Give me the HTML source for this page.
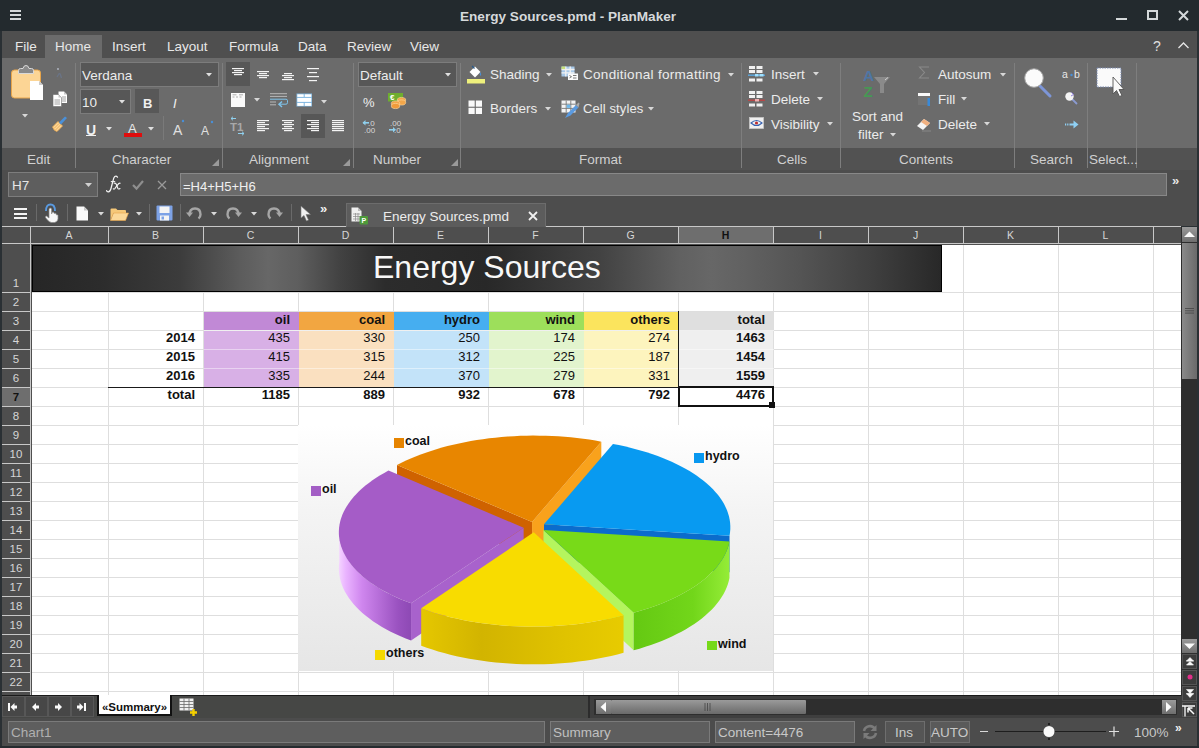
<!DOCTYPE html><html><head><meta charset="utf-8"><style>
*{margin:0;padding:0;box-sizing:border-box}
html,body{width:1199px;height:748px;overflow:hidden;background:#4d4d4d;font-family:"Liberation Sans",sans-serif;position:relative}
.a{position:absolute}
.t{position:absolute;white-space:nowrap;color:#e6e6e6}
svg{overflow:visible}
</style></head><body>
<div class="a" style="left:0px;top:0px;width:1199px;height:748px;background:#2a3034;"></div>
<div class="a" style="left:0px;top:0px;width:1199px;height:31px;background:#232a2e;"></div>
<div class="a" style="left:2px;top:31px;width:1195px;height:27px;background:#4f4f4f;"></div>
<div class="a" style="left:2px;top:58px;width:1195px;height:90px;background:#6b6b6b;"></div>
<div class="a" style="left:2px;top:148px;width:1195px;height:22px;background:#525252;"></div>
<div class="a" style="left:2px;top:170px;width:1195px;height:56px;background:#4d4d4d;"></div>
<div class="a" style="left:10px;top:10px;width:11px;height:2px;background:#d4d8da;"></div>
<div class="a" style="left:10px;top:14px;width:11px;height:2px;background:#d4d8da;"></div>
<div class="a" style="left:10px;top:18px;width:11px;height:2px;background:#d4d8da;"></div>
<div class="t" style="left:460px;top:9px;font-size:13.6px;line-height:16px;color:#d6d9db;font-weight:bold;">Energy Sources.pmd - PlanMaker</div>
<div class="a" style="left:1116px;top:18px;width:11px;height:2px;background:#d4d8da;"></div>
<div class="a" style="left:1147px;top:10px;width:11px;height:10px;border:2px solid #d4d8da"></div>
<svg class="a" style="left:1178px;top:10px;" width="11" height="11" viewBox="0 0 11 11"><path d="M1 1L10 10M10 1L1 10" stroke="#d4d8da" stroke-width="2"/></svg>
<div class="a" style="left:45px;top:35px;width:57px;height:23px;background:#6b6b6b;"></div>
<div class="t" style="left:15px;top:39px;font-size:13.5px;line-height:16px;color:#e8e8e8;font-weight:normal;">File</div>
<div class="t" style="left:55px;top:39px;font-size:13.5px;line-height:16px;color:#e8e8e8;font-weight:normal;">Home</div>
<div class="t" style="left:112px;top:39px;font-size:13.5px;line-height:16px;color:#e8e8e8;font-weight:normal;">Insert</div>
<div class="t" style="left:167px;top:39px;font-size:13.5px;line-height:16px;color:#e8e8e8;font-weight:normal;">Layout</div>
<div class="t" style="left:229px;top:39px;font-size:13.5px;line-height:16px;color:#e8e8e8;font-weight:normal;">Formula</div>
<div class="t" style="left:298px;top:39px;font-size:13.5px;line-height:16px;color:#e8e8e8;font-weight:normal;">Data</div>
<div class="t" style="left:347px;top:39px;font-size:13.5px;line-height:16px;color:#e8e8e8;font-weight:normal;">Review</div>
<div class="t" style="left:410px;top:39px;font-size:13.5px;line-height:16px;color:#e8e8e8;font-weight:normal;">View</div>
<div class="t" style="left:1153px;top:37.5px;font-size:14px;line-height:16px;color:#e0e0e0;font-weight:normal;">?</div>
<svg class="a" style="left:1178px;top:42px;" width="11" height="7" viewBox="0 0 11 7"><path d="M0.5 6L5.5 1L10.5 6" stroke="#e6e6e6" stroke-width="1.3" fill="none"/></svg>
<div class="a" style="left:75px;top:63px;width:1px;height:105px;background:#7e7e7e;"></div>
<div class="a" style="left:222px;top:63px;width:1px;height:105px;background:#7e7e7e;"></div>
<div class="a" style="left:353px;top:63px;width:1px;height:105px;background:#7e7e7e;"></div>
<div class="a" style="left:460px;top:63px;width:1px;height:105px;background:#7e7e7e;"></div>
<div class="a" style="left:741px;top:63px;width:1px;height:105px;background:#7e7e7e;"></div>
<div class="a" style="left:840px;top:63px;width:1px;height:105px;background:#7e7e7e;"></div>
<div class="a" style="left:1014px;top:63px;width:1px;height:105px;background:#7e7e7e;"></div>
<div class="a" style="left:1087px;top:63px;width:1px;height:105px;background:#7e7e7e;"></div>
<div class="a" style="left:1136px;top:63px;width:1px;height:105px;background:#7e7e7e;"></div>
<div class="t" style="left:27px;top:152px;font-size:13.5px;line-height:16px;color:#d0d0d0;font-weight:normal;">Edit</div>
<div class="t" style="left:112px;top:152px;font-size:13.5px;line-height:16px;color:#d0d0d0;font-weight:normal;">Character</div>
<div class="t" style="left:249px;top:152px;font-size:13.5px;line-height:16px;color:#d0d0d0;font-weight:normal;">Alignment</div>
<div class="t" style="left:373px;top:152px;font-size:13.5px;line-height:16px;color:#d0d0d0;font-weight:normal;">Number</div>
<div class="t" style="left:579px;top:152px;font-size:13.5px;line-height:16px;color:#d0d0d0;font-weight:normal;">Format</div>
<div class="t" style="left:777px;top:152px;font-size:13.5px;line-height:16px;color:#d0d0d0;font-weight:normal;">Cells</div>
<div class="t" style="left:899px;top:152px;font-size:13.5px;line-height:16px;color:#d0d0d0;font-weight:normal;">Contents</div>
<div class="t" style="left:1030px;top:152px;font-size:13.5px;line-height:16px;color:#d0d0d0;font-weight:normal;">Search</div>
<div class="t" style="left:1089px;top:152px;font-size:13.5px;line-height:16px;color:#d0d0d0;font-weight:normal;">Select...</div>
<svg class="a" style="left:212px;top:159px;" width="7" height="7" viewBox="0 0 7 7"><path d="M7 0L7 7L0 7Z" fill="#9a9a9a"/></svg>
<svg class="a" style="left:343px;top:159px;" width="7" height="7" viewBox="0 0 7 7"><path d="M7 0L7 7L0 7Z" fill="#9a9a9a"/></svg>
<svg class="a" style="left:451px;top:159px;" width="7" height="7" viewBox="0 0 7 7"><path d="M7 0L7 7L0 7Z" fill="#9a9a9a"/></svg>
<div class="a" style="left:8px;top:172px;width:90px;height:25px;background:#5e5e5e;border:1px solid #7d7d7d"></div>
<div class="t" style="left:12px;top:178px;font-size:13.5px;line-height:16px;color:#e6e6e6;font-weight:normal;">H7</div>
<svg class="a" style="left:85px;top:183px;" width="7" height="4" viewBox="0 0 7 4"><path d="M0 0L7 0L3.5 4Z" fill="#d0d0d0"/></svg>
<svg class="a" style="left:104px;top:175px;" width="18" height="18" viewBox="0 0 18 18"><path d="M13.5 2.2 Q12.2 0.6 10.8 1.6 Q9.8 2.4 9.2 5 L7 13.5 Q6.2 16.6 4.4 16.8 Q2.8 16.9 2.6 15.6" stroke="#f2f2f2" stroke-width="1.25" fill="none" stroke-linecap="round"/><path d="M6.8 6.6 H11.2" stroke="#f2f2f2" stroke-width="1.1"/><path d="M10.2 8.2 Q11.6 7.6 12.3 9.2 L13.8 13.2 Q14.4 14.6 16 13.6" stroke="#f2f2f2" stroke-width="1.15" fill="none" stroke-linecap="round"/><path d="M16.2 8.2 Q15 7.9 13.2 10.4 L10.8 13.6 Q10 14.4 9.3 13.8" stroke="#f2f2f2" stroke-width="1.15" fill="none" stroke-linecap="round"/></svg>
<svg class="a" style="left:132px;top:180px;" width="12" height="10" viewBox="0 0 12 10"><path d="M1 5L4.5 8.6L11 1" stroke="#8e8e8e" stroke-width="2.2" fill="none"/></svg>
<svg class="a" style="left:157px;top:180px;" width="10" height="10" viewBox="0 0 10 10"><path d="M1 1L9 9M9 1L1 9" stroke="#9a9a9a" stroke-width="1.3"/></svg>
<div class="a" style="left:180px;top:173px;width:987px;height:23px;background:#6b6b6b;border:1px solid #888"></div>
<div class="t" style="left:183px;top:179px;font-size:13px;line-height:15px;color:#f0f0f0;font-weight:normal;">=H4+H5+H6</div>
<div class="t" style="left:1172px;top:173px;font-size:13px;line-height:15px;color:#e6e6e6;font-weight:bold;">&raquo;</div>
<div class="a" style="left:31px;top:244px;width:1150px;height:451px;background:#ffffff;"></div>
<div class="a" style="left:108px;top:244px;width:1px;height:451px;background:#dedede;"></div>
<div class="a" style="left:203px;top:244px;width:1px;height:451px;background:#dedede;"></div>
<div class="a" style="left:298px;top:244px;width:1px;height:451px;background:#dedede;"></div>
<div class="a" style="left:393px;top:244px;width:1px;height:451px;background:#dedede;"></div>
<div class="a" style="left:488px;top:244px;width:1px;height:451px;background:#dedede;"></div>
<div class="a" style="left:583px;top:244px;width:1px;height:451px;background:#dedede;"></div>
<div class="a" style="left:678px;top:244px;width:1px;height:451px;background:#dedede;"></div>
<div class="a" style="left:773px;top:244px;width:1px;height:451px;background:#dedede;"></div>
<div class="a" style="left:868px;top:244px;width:1px;height:451px;background:#dedede;"></div>
<div class="a" style="left:963px;top:244px;width:1px;height:451px;background:#dedede;"></div>
<div class="a" style="left:1058px;top:244px;width:1px;height:451px;background:#dedede;"></div>
<div class="a" style="left:1153px;top:244px;width:1px;height:451px;background:#dedede;"></div>
<div class="a" style="left:31px;top:292px;width:1150px;height:1px;background:#dedede;"></div>
<div class="a" style="left:31px;top:311px;width:1150px;height:1px;background:#dedede;"></div>
<div class="a" style="left:31px;top:330px;width:1150px;height:1px;background:#dedede;"></div>
<div class="a" style="left:31px;top:349px;width:1150px;height:1px;background:#dedede;"></div>
<div class="a" style="left:31px;top:368px;width:1150px;height:1px;background:#dedede;"></div>
<div class="a" style="left:31px;top:387px;width:1150px;height:1px;background:#dedede;"></div>
<div class="a" style="left:31px;top:406px;width:1150px;height:1px;background:#dedede;"></div>
<div class="a" style="left:31px;top:425px;width:1150px;height:1px;background:#dedede;"></div>
<div class="a" style="left:31px;top:444px;width:1150px;height:1px;background:#dedede;"></div>
<div class="a" style="left:31px;top:463px;width:1150px;height:1px;background:#dedede;"></div>
<div class="a" style="left:31px;top:482px;width:1150px;height:1px;background:#dedede;"></div>
<div class="a" style="left:31px;top:501px;width:1150px;height:1px;background:#dedede;"></div>
<div class="a" style="left:31px;top:520px;width:1150px;height:1px;background:#dedede;"></div>
<div class="a" style="left:31px;top:539px;width:1150px;height:1px;background:#dedede;"></div>
<div class="a" style="left:31px;top:558px;width:1150px;height:1px;background:#dedede;"></div>
<div class="a" style="left:31px;top:577px;width:1150px;height:1px;background:#dedede;"></div>
<div class="a" style="left:31px;top:596px;width:1150px;height:1px;background:#dedede;"></div>
<div class="a" style="left:31px;top:615px;width:1150px;height:1px;background:#dedede;"></div>
<div class="a" style="left:31px;top:634px;width:1150px;height:1px;background:#dedede;"></div>
<div class="a" style="left:31px;top:653px;width:1150px;height:1px;background:#dedede;"></div>
<div class="a" style="left:31px;top:672px;width:1150px;height:1px;background:#dedede;"></div>
<div class="a" style="left:31px;top:691px;width:1150px;height:1px;background:#dedede;"></div>
<div class="a" style="left:2px;top:226px;width:1179px;height:1px;background:#c8c8c8;"></div>
<div class="a" style="left:2px;top:227px;width:1179px;height:16px;background:#4e4e4e;"></div>
<div class="a" style="left:2px;top:243px;width:1179px;height:1px;background:#c8c8c8;"></div>
<div class="a" style="left:679px;top:227px;width:94px;height:16px;background:#6e6e6e;"></div>
<div class="a" style="left:30px;top:227px;width:1px;height:16px;background:#c8c8c8;"></div>
<div class="a" style="left:108px;top:227px;width:1px;height:16px;background:#c8c8c8;"></div>
<div class="a" style="left:203px;top:227px;width:1px;height:16px;background:#c8c8c8;"></div>
<div class="a" style="left:298px;top:227px;width:1px;height:16px;background:#c8c8c8;"></div>
<div class="a" style="left:393px;top:227px;width:1px;height:16px;background:#c8c8c8;"></div>
<div class="a" style="left:488px;top:227px;width:1px;height:16px;background:#c8c8c8;"></div>
<div class="a" style="left:583px;top:227px;width:1px;height:16px;background:#c8c8c8;"></div>
<div class="a" style="left:678px;top:227px;width:1px;height:16px;background:#c8c8c8;"></div>
<div class="a" style="left:773px;top:227px;width:1px;height:16px;background:#c8c8c8;"></div>
<div class="a" style="left:868px;top:227px;width:1px;height:16px;background:#c8c8c8;"></div>
<div class="a" style="left:963px;top:227px;width:1px;height:16px;background:#c8c8c8;"></div>
<div class="a" style="left:1058px;top:227px;width:1px;height:16px;background:#c8c8c8;"></div>
<div class="a" style="left:1153px;top:227px;width:1px;height:16px;background:#c8c8c8;"></div>
<div class="t" style="left:30px;top:229px;width:78px;text-align:center;font-size:10.5px;line-height:13px;color:#d6d6d6;font-weight:normal">A</div>
<div class="t" style="left:108px;top:229px;width:95px;text-align:center;font-size:10.5px;line-height:13px;color:#d6d6d6;font-weight:normal">B</div>
<div class="t" style="left:203px;top:229px;width:95px;text-align:center;font-size:10.5px;line-height:13px;color:#d6d6d6;font-weight:normal">C</div>
<div class="t" style="left:298px;top:229px;width:95px;text-align:center;font-size:10.5px;line-height:13px;color:#d6d6d6;font-weight:normal">D</div>
<div class="t" style="left:393px;top:229px;width:95px;text-align:center;font-size:10.5px;line-height:13px;color:#d6d6d6;font-weight:normal">E</div>
<div class="t" style="left:488px;top:229px;width:95px;text-align:center;font-size:10.5px;line-height:13px;color:#d6d6d6;font-weight:normal">F</div>
<div class="t" style="left:583px;top:229px;width:95px;text-align:center;font-size:10.5px;line-height:13px;color:#d6d6d6;font-weight:normal">G</div>
<div class="t" style="left:678px;top:229px;width:95px;text-align:center;font-size:10.5px;line-height:13px;color:#111;font-weight:bold">H</div>
<div class="t" style="left:773px;top:229px;width:95px;text-align:center;font-size:10.5px;line-height:13px;color:#d6d6d6;font-weight:normal">I</div>
<div class="t" style="left:868px;top:229px;width:95px;text-align:center;font-size:10.5px;line-height:13px;color:#d6d6d6;font-weight:normal">J</div>
<div class="t" style="left:963px;top:229px;width:95px;text-align:center;font-size:10.5px;line-height:13px;color:#d6d6d6;font-weight:normal">K</div>
<div class="t" style="left:1058px;top:229px;width:95px;text-align:center;font-size:10.5px;line-height:13px;color:#d6d6d6;font-weight:normal">L</div>
<div class="a" style="left:31px;top:244px;width:1150px;height:1px;background:#505050;"></div>
<div class="a" style="left:31px;top:244px;width:1px;height:451px;background:#505050;"></div>
<div class="a" style="left:2px;top:244px;width:28px;height:451px;background:#4e4e4e;"></div>
<div class="a" style="left:30px;top:244px;width:1px;height:451px;background:#c8c8c8;"></div>
<div class="a" style="left:2px;top:388px;width:28px;height:18px;background:#6e6e6e;"></div>
<div class="a" style="left:2px;top:292px;width:29px;height:1px;background:#c8c8c8;"></div>
<div class="a" style="left:2px;top:311px;width:29px;height:1px;background:#c8c8c8;"></div>
<div class="a" style="left:2px;top:330px;width:29px;height:1px;background:#c8c8c8;"></div>
<div class="a" style="left:2px;top:349px;width:29px;height:1px;background:#c8c8c8;"></div>
<div class="a" style="left:2px;top:368px;width:29px;height:1px;background:#c8c8c8;"></div>
<div class="a" style="left:2px;top:387px;width:29px;height:1px;background:#c8c8c8;"></div>
<div class="a" style="left:2px;top:406px;width:29px;height:1px;background:#c8c8c8;"></div>
<div class="a" style="left:2px;top:425px;width:29px;height:1px;background:#c8c8c8;"></div>
<div class="a" style="left:2px;top:444px;width:29px;height:1px;background:#c8c8c8;"></div>
<div class="a" style="left:2px;top:463px;width:29px;height:1px;background:#c8c8c8;"></div>
<div class="a" style="left:2px;top:482px;width:29px;height:1px;background:#c8c8c8;"></div>
<div class="a" style="left:2px;top:501px;width:29px;height:1px;background:#c8c8c8;"></div>
<div class="a" style="left:2px;top:520px;width:29px;height:1px;background:#c8c8c8;"></div>
<div class="a" style="left:2px;top:539px;width:29px;height:1px;background:#c8c8c8;"></div>
<div class="a" style="left:2px;top:558px;width:29px;height:1px;background:#c8c8c8;"></div>
<div class="a" style="left:2px;top:577px;width:29px;height:1px;background:#c8c8c8;"></div>
<div class="a" style="left:2px;top:596px;width:29px;height:1px;background:#c8c8c8;"></div>
<div class="a" style="left:2px;top:615px;width:29px;height:1px;background:#c8c8c8;"></div>
<div class="a" style="left:2px;top:634px;width:29px;height:1px;background:#c8c8c8;"></div>
<div class="a" style="left:2px;top:653px;width:29px;height:1px;background:#c8c8c8;"></div>
<div class="a" style="left:2px;top:672px;width:29px;height:1px;background:#c8c8c8;"></div>
<div class="a" style="left:2px;top:691px;width:29px;height:1px;background:#c8c8c8;"></div>
<div class="t" style="left:2px;top:276px;width:28px;text-align:center;font-size:11.5px;line-height:14px;color:#d6d6d6;font-weight:normal">1</div>
<div class="t" style="left:2px;top:295px;width:28px;text-align:center;font-size:11.5px;line-height:14px;color:#d6d6d6;font-weight:normal">2</div>
<div class="t" style="left:2px;top:314px;width:28px;text-align:center;font-size:11.5px;line-height:14px;color:#d6d6d6;font-weight:normal">3</div>
<div class="t" style="left:2px;top:333px;width:28px;text-align:center;font-size:11.5px;line-height:14px;color:#d6d6d6;font-weight:normal">4</div>
<div class="t" style="left:2px;top:352px;width:28px;text-align:center;font-size:11.5px;line-height:14px;color:#d6d6d6;font-weight:normal">5</div>
<div class="t" style="left:2px;top:371px;width:28px;text-align:center;font-size:11.5px;line-height:14px;color:#d6d6d6;font-weight:normal">6</div>
<div class="t" style="left:2px;top:390px;width:28px;text-align:center;font-size:11.5px;line-height:14px;color:#111;font-weight:bold">7</div>
<div class="t" style="left:2px;top:409px;width:28px;text-align:center;font-size:11.5px;line-height:14px;color:#d6d6d6;font-weight:normal">8</div>
<div class="t" style="left:2px;top:428px;width:28px;text-align:center;font-size:11.5px;line-height:14px;color:#d6d6d6;font-weight:normal">9</div>
<div class="t" style="left:2px;top:447px;width:28px;text-align:center;font-size:11.5px;line-height:14px;color:#d6d6d6;font-weight:normal">10</div>
<div class="t" style="left:2px;top:466px;width:28px;text-align:center;font-size:11.5px;line-height:14px;color:#d6d6d6;font-weight:normal">11</div>
<div class="t" style="left:2px;top:485px;width:28px;text-align:center;font-size:11.5px;line-height:14px;color:#d6d6d6;font-weight:normal">12</div>
<div class="t" style="left:2px;top:504px;width:28px;text-align:center;font-size:11.5px;line-height:14px;color:#d6d6d6;font-weight:normal">13</div>
<div class="t" style="left:2px;top:523px;width:28px;text-align:center;font-size:11.5px;line-height:14px;color:#d6d6d6;font-weight:normal">14</div>
<div class="t" style="left:2px;top:542px;width:28px;text-align:center;font-size:11.5px;line-height:14px;color:#d6d6d6;font-weight:normal">15</div>
<div class="t" style="left:2px;top:561px;width:28px;text-align:center;font-size:11.5px;line-height:14px;color:#d6d6d6;font-weight:normal">16</div>
<div class="t" style="left:2px;top:580px;width:28px;text-align:center;font-size:11.5px;line-height:14px;color:#d6d6d6;font-weight:normal">17</div>
<div class="t" style="left:2px;top:599px;width:28px;text-align:center;font-size:11.5px;line-height:14px;color:#d6d6d6;font-weight:normal">18</div>
<div class="t" style="left:2px;top:618px;width:28px;text-align:center;font-size:11.5px;line-height:14px;color:#d6d6d6;font-weight:normal">19</div>
<div class="t" style="left:2px;top:637px;width:28px;text-align:center;font-size:11.5px;line-height:14px;color:#d6d6d6;font-weight:normal">20</div>
<div class="t" style="left:2px;top:656px;width:28px;text-align:center;font-size:11.5px;line-height:14px;color:#d6d6d6;font-weight:normal">21</div>
<div class="t" style="left:2px;top:675px;width:28px;text-align:center;font-size:11.5px;line-height:14px;color:#d6d6d6;font-weight:normal">22</div>
<div class="a" style="left:2px;top:695px;width:1195px;height:23px;background:#3d3d3d;"></div>
<div class="a" style="left:2px;top:718px;width:1195px;height:28px;background:#4d4d4d;"></div>
<div class="a" style="left:32px;top:245px;width:910px;height:47px;background:#000"></div>
<div class="a" style="left:33px;top:246px;width:908px;height:45px;background:linear-gradient(90deg,rgb(38,38,38) 0.0%,rgb(44,44,44) 7.4%,rgb(60,60,60) 16.2%,rgb(92,92,92) 22.8%,rgb(103,103,103) 25.9%,rgb(94,94,94) 29.2%,rgb(66,66,66) 33.8%,rgb(44,44,44) 38.8%,rgb(40,40,40) 49.9%,rgb(66,66,66) 62.4%,rgb(97,97,97) 71.3%,rgb(103,103,103) 74.7%,rgb(97,97,97) 78.4%,rgb(84,84,84) 84.5%,rgb(64,64,64) 92.2%,rgb(40,40,40) 100.0%)"></div>
<div class="t" style="left:373px;top:249px;font-size:32px;line-height:37px;color:#f8f8f8;font-weight:normal;">Energy Sources</div>
<div class="a" style="left:204px;top:312px;width:95px;height:18px;background:#c189d6;"></div>
<div class="a" style="left:204px;top:331px;width:95px;height:56px;background:#d8b0e6;"></div>
<div class="a" style="left:204px;top:330px;width:95px;height:1px;background:rgba(255,255,255,0.55);"></div>
<div class="a" style="left:204px;top:349px;width:95px;height:1px;background:rgba(255,255,255,0.45);"></div>
<div class="a" style="left:204px;top:368px;width:95px;height:1px;background:rgba(255,255,255,0.45);"></div>
<div class="a" style="left:299px;top:312px;width:95px;height:18px;background:#f2a641;"></div>
<div class="a" style="left:299px;top:331px;width:95px;height:56px;background:#fae0c0;"></div>
<div class="a" style="left:299px;top:330px;width:95px;height:1px;background:rgba(255,255,255,0.55);"></div>
<div class="a" style="left:299px;top:349px;width:95px;height:1px;background:rgba(255,255,255,0.45);"></div>
<div class="a" style="left:299px;top:368px;width:95px;height:1px;background:rgba(255,255,255,0.45);"></div>
<div class="a" style="left:394px;top:312px;width:95px;height:18px;background:#46aef0;"></div>
<div class="a" style="left:394px;top:331px;width:95px;height:56px;background:#c3e3f9;"></div>
<div class="a" style="left:394px;top:330px;width:95px;height:1px;background:rgba(255,255,255,0.55);"></div>
<div class="a" style="left:394px;top:349px;width:95px;height:1px;background:rgba(255,255,255,0.45);"></div>
<div class="a" style="left:394px;top:368px;width:95px;height:1px;background:rgba(255,255,255,0.45);"></div>
<div class="a" style="left:489px;top:312px;width:95px;height:18px;background:#9ddf5b;"></div>
<div class="a" style="left:489px;top:331px;width:95px;height:56px;background:#e2f4cd;"></div>
<div class="a" style="left:489px;top:330px;width:95px;height:1px;background:rgba(255,255,255,0.55);"></div>
<div class="a" style="left:489px;top:349px;width:95px;height:1px;background:rgba(255,255,255,0.45);"></div>
<div class="a" style="left:489px;top:368px;width:95px;height:1px;background:rgba(255,255,255,0.45);"></div>
<div class="a" style="left:584px;top:312px;width:95px;height:18px;background:#fbe45d;"></div>
<div class="a" style="left:584px;top:331px;width:95px;height:56px;background:#fdf4be;"></div>
<div class="a" style="left:584px;top:330px;width:95px;height:1px;background:rgba(255,255,255,0.55);"></div>
<div class="a" style="left:584px;top:349px;width:95px;height:1px;background:rgba(255,255,255,0.45);"></div>
<div class="a" style="left:584px;top:368px;width:95px;height:1px;background:rgba(255,255,255,0.45);"></div>
<div class="a" style="left:679px;top:312px;width:94px;height:18px;background:#dfdfdf;"></div>
<div class="a" style="left:679px;top:331px;width:94px;height:56px;background:#efefef;"></div>
<div class="a" style="left:679px;top:330px;width:95px;height:1px;background:rgba(255,255,255,0.55);"></div>
<div class="a" style="left:679px;top:349px;width:95px;height:1px;background:rgba(255,255,255,0.45);"></div>
<div class="a" style="left:679px;top:368px;width:95px;height:1px;background:rgba(255,255,255,0.45);"></div>
<div class="t" style="left:190px;top:312px;width:100px;text-align:right;font-size:13px;line-height:15px;color:#111;font-weight:bold">oil</div>
<div class="t" style="left:190px;top:330px;width:100px;text-align:right;font-size:13px;line-height:15px;color:#111;font-weight:normal">435</div>
<div class="t" style="left:190px;top:349px;width:100px;text-align:right;font-size:13px;line-height:15px;color:#111;font-weight:normal">415</div>
<div class="t" style="left:190px;top:368px;width:100px;text-align:right;font-size:13px;line-height:15px;color:#111;font-weight:normal">335</div>
<div class="t" style="left:190px;top:387px;width:100px;text-align:right;font-size:13px;line-height:15px;color:#111;font-weight:bold">1185</div>
<div class="t" style="left:285px;top:312px;width:100px;text-align:right;font-size:13px;line-height:15px;color:#111;font-weight:bold">coal</div>
<div class="t" style="left:285px;top:330px;width:100px;text-align:right;font-size:13px;line-height:15px;color:#111;font-weight:normal">330</div>
<div class="t" style="left:285px;top:349px;width:100px;text-align:right;font-size:13px;line-height:15px;color:#111;font-weight:normal">315</div>
<div class="t" style="left:285px;top:368px;width:100px;text-align:right;font-size:13px;line-height:15px;color:#111;font-weight:normal">244</div>
<div class="t" style="left:285px;top:387px;width:100px;text-align:right;font-size:13px;line-height:15px;color:#111;font-weight:bold">889</div>
<div class="t" style="left:380px;top:312px;width:100px;text-align:right;font-size:13px;line-height:15px;color:#111;font-weight:bold">hydro</div>
<div class="t" style="left:380px;top:330px;width:100px;text-align:right;font-size:13px;line-height:15px;color:#111;font-weight:normal">250</div>
<div class="t" style="left:380px;top:349px;width:100px;text-align:right;font-size:13px;line-height:15px;color:#111;font-weight:normal">312</div>
<div class="t" style="left:380px;top:368px;width:100px;text-align:right;font-size:13px;line-height:15px;color:#111;font-weight:normal">370</div>
<div class="t" style="left:380px;top:387px;width:100px;text-align:right;font-size:13px;line-height:15px;color:#111;font-weight:bold">932</div>
<div class="t" style="left:475px;top:312px;width:100px;text-align:right;font-size:13px;line-height:15px;color:#111;font-weight:bold">wind</div>
<div class="t" style="left:475px;top:330px;width:100px;text-align:right;font-size:13px;line-height:15px;color:#111;font-weight:normal">174</div>
<div class="t" style="left:475px;top:349px;width:100px;text-align:right;font-size:13px;line-height:15px;color:#111;font-weight:normal">225</div>
<div class="t" style="left:475px;top:368px;width:100px;text-align:right;font-size:13px;line-height:15px;color:#111;font-weight:normal">279</div>
<div class="t" style="left:475px;top:387px;width:100px;text-align:right;font-size:13px;line-height:15px;color:#111;font-weight:bold">678</div>
<div class="t" style="left:570px;top:312px;width:100px;text-align:right;font-size:13px;line-height:15px;color:#111;font-weight:bold">others</div>
<div class="t" style="left:570px;top:330px;width:100px;text-align:right;font-size:13px;line-height:15px;color:#111;font-weight:normal">274</div>
<div class="t" style="left:570px;top:349px;width:100px;text-align:right;font-size:13px;line-height:15px;color:#111;font-weight:normal">187</div>
<div class="t" style="left:570px;top:368px;width:100px;text-align:right;font-size:13px;line-height:15px;color:#111;font-weight:normal">331</div>
<div class="t" style="left:570px;top:387px;width:100px;text-align:right;font-size:13px;line-height:15px;color:#111;font-weight:bold">792</div>
<div class="t" style="left:665px;top:312px;width:100px;text-align:right;font-size:13px;line-height:15px;color:#111;font-weight:bold">total</div>
<div class="t" style="left:665px;top:330px;width:100px;text-align:right;font-size:13px;line-height:15px;color:#111;font-weight:bold">1463</div>
<div class="t" style="left:665px;top:349px;width:100px;text-align:right;font-size:13px;line-height:15px;color:#111;font-weight:bold">1454</div>
<div class="t" style="left:665px;top:368px;width:100px;text-align:right;font-size:13px;line-height:15px;color:#111;font-weight:bold">1559</div>
<div class="t" style="left:665px;top:387px;width:100px;text-align:right;font-size:13px;line-height:15px;color:#111;font-weight:bold">4476</div>
<div class="t" style="left:95px;top:330px;width:100px;text-align:right;font-size:13px;line-height:15px;color:#111;font-weight:bold">2014</div>
<div class="t" style="left:95px;top:349px;width:100px;text-align:right;font-size:13px;line-height:15px;color:#111;font-weight:bold">2015</div>
<div class="t" style="left:95px;top:368px;width:100px;text-align:right;font-size:13px;line-height:15px;color:#111;font-weight:bold">2016</div>
<div class="t" style="left:95px;top:387px;width:100px;text-align:right;font-size:13px;line-height:15px;color:#111;font-weight:bold">total</div>
<div class="a" style="left:108px;top:387px;width:570px;height:1px;background:#1a1a1a;"></div>
<div class="a" style="left:678px;top:311px;width:1px;height:77px;background:#1a1a1a;"></div>
<div class="a" style="left:678px;top:386px;width:96px;height:21px;border:2px solid #111"></div>
<div class="a" style="left:769px;top:402px;width:6px;height:6px;background:#111;"></div>
<div class="a" style="left:298px;top:425px;width:475px;height:246px;background:linear-gradient(180deg,#ffffff 0%,#f4f4f4 35%,#e6e6e6 100%)"></div>
<svg class="a" style="left:0px;top:0px;pointer-events:none" width="1199" height="748" viewBox="0 0 1199 748"><defs>
<linearGradient id="gOil" gradientUnits="userSpaceOnUse" x1="335" y1="0" x2="425" y2="0">
<stop offset="0" stop-color="#fae6ff"/><stop offset="0.12" stop-color="#eab4ff"/><stop offset="0.3" stop-color="#cf86ee"/><stop offset="0.7" stop-color="#9a52c0"/><stop offset="1" stop-color="#8040a8"/></linearGradient>
<linearGradient id="gOth" gradientUnits="userSpaceOnUse" x1="418" y1="0" x2="630" y2="0">
<stop offset="0" stop-color="#e6c800"/><stop offset="0.3" stop-color="#d2b400"/><stop offset="0.7" stop-color="#e0c300"/><stop offset="1" stop-color="#e8cc00"/></linearGradient>
<linearGradient id="gWind" gradientUnits="userSpaceOnUse" x1="630" y1="0" x2="735" y2="0">
<stop offset="0" stop-color="#64c812"/><stop offset="0.6" stop-color="#72d61a"/><stop offset="1" stop-color="#9af03c"/></linearGradient>
<linearGradient id="gHyd" gradientUnits="userSpaceOnUse" x1="700" y1="0" x2="735" y2="0">
<stop offset="0" stop-color="#0b7ad8"/><stop offset="1" stop-color="#2aa8ff"/></linearGradient>
</defs><polygon points="532.04,521.89 601.33,441.64 601.33,476.50 532.04,557.96" fill="#f9a21c"/><polygon points="532.04,521.89 396.99,465.05 396.99,500.09 532.04,557.96" fill="#cf6200"/><polygon points="532.04,521.89 601.33,441.64 595.37,440.57 589.34,439.61 583.24,438.75 577.09,437.99 570.89,437.33 564.64,436.78 558.37,436.34 552.06,435.99 545.73,435.76 539.39,435.63 533.05,435.60 526.70,435.68 520.36,435.87 514.04,436.16 507.74,436.55 501.47,437.05 495.23,437.66 489.04,438.36 482.90,439.17 476.82,440.08 470.80,441.10 464.85,442.21 458.98,443.42 453.19,444.72 447.50,446.12 441.90,447.62 436.41,449.21 431.03,450.89 425.77,452.66 420.63,454.52 415.61,456.46 410.74,458.49 406.01,460.60 401.42,462.79 396.99,465.05" fill="#e88600"/><polygon points="543.98,524.37 729.52,535.73 729.52,572.21 543.98,560.49" fill="#0b6ccc"/><polygon points="543.98,524.37 729.52,535.73 730.02,532.53 730.29,529.32 730.32,526.12 730.12,522.92 729.68,519.74 729.02,516.57 728.12,513.42 727.00,510.29 725.65,507.19 724.08,504.12 722.29,501.08 720.28,498.08 718.06,495.11 715.64,492.20 713.00,489.33 710.16,486.51 707.13,483.75 703.90,481.04 700.49,478.40 696.89,475.81 693.11,473.30 689.16,470.85 685.04,468.47 680.76,466.17 676.32,463.94 671.73,461.79 666.99,459.73 662.12,457.74 657.11,455.84 651.97,454.03 646.71,452.31 641.33,450.68 635.85,449.14 630.26,447.69 624.58,446.34 618.81,445.08 612.96,443.92" fill="#089af1"/><polygon points="523.63,527.69 411.08,603.36 411.08,640.62 523.63,563.84" fill="#a862cc"/><polygon points="339.30,526.04 338.96,529.26 338.85,532.49 338.99,535.73 339.36,538.96 339.98,542.19 340.83,545.41 341.92,548.62 343.26,551.81 344.83,554.97 346.64,558.11 348.68,561.22 350.96,564.29 353.47,567.32 356.22,570.31 359.19,573.26 362.38,576.15 365.79,578.98 369.43,581.75 373.27,584.46 377.32,587.10 381.58,589.67 386.03,592.17 390.68,594.58 395.52,596.91 400.53,599.15 405.72,601.31 411.08,603.36 411.08,640.62 405.72,638.52 400.53,636.33 395.52,634.04 390.68,631.67 386.03,629.22 381.58,626.68 377.32,624.07 373.27,621.38 369.43,618.62 365.79,615.80 362.38,612.92 359.19,609.98 356.22,606.99 353.47,603.95 350.96,600.86 348.68,597.74 346.64,594.58 344.83,591.39 343.26,588.17 341.92,584.93 340.83,581.68 339.98,578.40 339.36,575.12 338.99,571.84 338.85,568.55 338.96,565.27 339.30,561.99" fill="url(#gOil)"/><polygon points="523.63,527.69 388.51,470.55 384.24,472.88 380.15,475.28 376.21,477.76 372.45,480.29 368.87,482.90 365.47,485.56 362.25,488.28 359.23,491.05 356.39,493.88 353.76,496.75 351.33,499.67 349.11,502.63 347.10,505.63 345.30,508.66 343.72,511.73 342.35,514.82 341.21,517.94 340.29,521.08 339.59,524.24 339.12,527.41 338.89,530.58 338.88,533.77 339.10,536.95 339.56,540.13 340.24,543.31 341.16,546.47 342.32,549.62 343.70,552.76 345.32,555.86 347.16,558.95 349.23,562.00 351.53,565.01 354.06,567.99 356.81,570.92 359.77,573.81 362.95,576.64 366.35,579.42 369.96,582.14 373.77,584.80 377.78,587.39 381.99,589.91 386.39,592.36 390.98,594.73 395.75,597.02 400.69,599.22 405.81,601.34 411.08,603.36" fill="#a55cc7"/><polygon points="543.46,530.06 633.64,612.73 633.64,650.34 543.46,566.27" fill="#b4f55e"/><polygon points="633.64,612.73 639.54,611.07 645.32,609.31 650.95,607.44 656.44,605.48 661.78,603.42 666.95,601.27 671.96,599.04 676.80,596.72 681.46,594.32 685.93,591.84 690.21,589.28 694.29,586.66 698.18,583.97 701.85,581.21 705.32,578.40 708.57,575.53 711.61,572.61 714.43,569.64 717.02,566.63 719.39,563.58 721.52,560.50 723.43,557.39 725.11,554.25 726.55,551.08 727.76,547.90 728.73,544.71 729.47,541.50 729.47,578.07 728.73,581.33 727.76,584.57 726.55,587.80 725.11,591.01 723.43,594.20 721.52,597.36 719.39,600.49 717.02,603.59 714.43,606.64 711.61,609.66 708.57,612.62 705.32,615.53 701.85,618.39 698.18,621.18 694.29,623.91 690.21,626.57 685.93,629.16 681.46,631.68 676.80,634.11 671.96,636.47 666.95,638.73 661.78,640.91 656.44,643.00 650.95,644.98 645.32,646.87 639.54,648.66 633.64,650.34" fill="url(#gWind)"/><polygon points="543.46,530.06 633.64,612.73 639.54,611.07 645.32,609.31 650.95,607.44 656.44,605.48 661.78,603.42 666.95,601.27 671.96,599.04 676.80,596.72 681.46,594.32 685.93,591.84 690.21,589.28 694.29,586.66 698.18,583.97 701.85,581.21 705.32,578.40 708.57,575.53 711.61,572.61 714.43,569.64 717.02,566.63 719.39,563.58 721.52,560.50 723.43,557.39 725.11,554.25 726.55,551.08 727.76,547.90 728.73,544.71 729.47,541.50" fill="#78da18"/><polygon points="421.20,608.36 426.73,610.33 432.41,612.20 438.23,613.96 444.19,615.62 450.29,617.17 456.50,618.61 462.82,619.94 469.25,621.15 475.77,622.25 482.38,623.22 489.06,624.08 495.81,624.82 502.62,625.43 509.47,625.92 516.36,626.28 523.28,626.52 530.22,626.63 537.16,626.61 544.10,626.47 551.03,626.20 557.93,625.81 564.80,625.29 571.63,624.65 578.41,623.89 585.12,623.00 591.77,621.99 598.33,620.86 604.80,619.61 611.17,618.25 617.43,616.78 623.57,615.19 623.57,652.83 617.43,654.44 611.17,655.93 604.80,657.31 598.33,658.57 591.77,659.71 585.12,660.73 578.41,661.62 571.63,662.39 564.80,663.04 557.93,663.56 551.03,663.95 544.10,664.22 537.16,664.35 530.22,664.36 523.28,664.24 516.36,663.99 509.47,663.62 502.62,663.12 495.81,662.49 489.06,661.74 482.38,660.86 475.77,659.86 469.25,658.74 462.82,657.50 456.50,656.15 450.29,654.68 444.19,653.10 438.23,651.41 432.41,649.61 426.73,647.71 421.20,645.70" fill="url(#gOth)"/><polygon points="533.71,532.36 421.20,608.36 426.73,610.33 432.41,612.20 438.23,613.96 444.19,615.62 450.29,617.17 456.50,618.61 462.82,619.94 469.25,621.15 475.77,622.25 482.38,623.22 489.06,624.08 495.81,624.82 502.62,625.43 509.47,625.92 516.36,626.28 523.28,626.52 530.22,626.63 537.16,626.61 544.10,626.47 551.03,626.20 557.93,625.81 564.80,625.29 571.63,624.65 578.41,623.89 585.12,623.00 591.77,621.99 598.33,620.86 604.80,619.61 611.17,618.25 617.43,616.78 623.57,615.19" fill="#f8dc00"/></svg>
<div class="a" style="left:394px;top:438px;width:10px;height:9.5px;background:#e68400;"></div>
<div class="t" style="left:405px;top:434px;font-size:12.5px;line-height:14px;color:#111;font-weight:bold;">coal</div>
<div class="a" style="left:311px;top:486px;width:10px;height:9.5px;background:#a35ec5;"></div>
<div class="t" style="left:322px;top:482px;font-size:12.5px;line-height:14px;color:#111;font-weight:bold;">oil</div>
<div class="a" style="left:694px;top:453px;width:10px;height:9.5px;background:#0898f0;"></div>
<div class="t" style="left:705px;top:449px;font-size:12.5px;line-height:14px;color:#111;font-weight:bold;">hydro</div>
<div class="a" style="left:707px;top:640.5px;width:10px;height:9.5px;background:#76d919;"></div>
<div class="t" style="left:718px;top:636.5px;font-size:12.5px;line-height:14px;color:#111;font-weight:bold;">wind</div>
<div class="a" style="left:375px;top:650px;width:10px;height:9.5px;background:#f5d900;"></div>
<div class="t" style="left:386px;top:646px;font-size:12.5px;line-height:14px;color:#111;font-weight:bold;">others</div>
<svg class="a" style="left:10px;top:64px;" width="36" height="38" viewBox="0 0 36 38">
<rect x="1.5" y="6" width="29" height="28" rx="3" fill="#fcd595" stroke="#e8a54a" stroke-width="1"/>
<path d="M8.5 9.5 L8.5 6.5 Q8.5 4.5 10.5 4.5 L13 4.5 Q13.5 1.5 16 1.5 Q18.5 1.5 19 4.5 L21.5 4.5 Q23.5 4.5 23.5 6.5 L23.5 9.5 Z" fill="#8a8a8a" stroke="#d9d9d9" stroke-width="1"/>
<path d="M20 17 L29 17 L33 21 L33 36 L20 36 Z" fill="#ffffff"/>
<path d="M29 17 L29 21 L33 21 Z" fill="#cccccc"/>
</svg>
<svg class="a" style="left:22px;top:114px;" width="6" height="3.5" viewBox="0 0 6 3.5"><path d="M0 0L6 0L3.0 3.5Z" fill="#d8d8d8"/></svg>
<svg class="a" style="left:53px;top:66px;" width="14" height="14" viewBox="0 0 14 14"><circle cx="5" cy="3" r="0.9" fill="#c8d0e0" opacity="0.8"/><path d="M4 11 L6.5 7 M8.5 12 L7 7.5" stroke="#6a7fa8" stroke-width="1.3" opacity="0.45"/></svg>
<svg class="a" style="left:52px;top:91px;" width="16" height="16" viewBox="0 0 16 16">
<path d="M6.5 0.5 L12 0.5 L15 3.5 L15 12 L6.5 12 Z" fill="#ffffff"/><path d="M12 0.5 L12 3.5 L15 3.5Z" fill="#c8c8c8"/>
<path d="M10 6h4M10 8h4M10 10h4" stroke="#8a8a8a" stroke-width="0.8"/>
<path d="M1 3.5 L6.5 3.5 L9.5 6.5 L9.5 15.5 L1 15.5 Z" fill="#ffffff" stroke="#6b6b6b" stroke-width="0.6"/><path d="M6.5 3.5 L6.5 6.5 L9.5 6.5Z" fill="#c8c8c8"/>
<path d="M2.5 9h5.5M2.5 11h5.5M2.5 13h5.5" stroke="#8a8a8a" stroke-width="0.8"/>
</svg>
<svg class="a" style="left:51px;top:115px;" width="18" height="18" viewBox="0 0 18 18">
<path d="M1.5 12 L7 6.5 L11.5 11 L6 16.5 Q3 16 1.5 12Z" fill="#fcd595" stroke="#e8a54a" stroke-width="0.8"/>
<path d="M3 13.5L8 8.5M4.5 15L9.5 10" stroke="#e8a54a" stroke-width="0.8"/>
<path d="M8 7.5 L10 9.5 L16 3 L14 1.5Z" fill="#4a90d9"/>
</svg>
<div class="a" style="left:80px;top:62px;width:139px;height:25px;background:#575757;border:1px solid #7c7c7c"></div>
<div class="t" style="left:82px;top:68px;font-size:13.5px;line-height:16px;color:#ececec;font-weight:normal;">Verdana</div>
<svg class="a" style="left:206px;top:73px;" width="6" height="3.5" viewBox="0 0 6 3.5"><path d="M0 0L6 0L3.0 3.5Z" fill="#e0e0e0"/></svg>
<div class="a" style="left:80px;top:89px;width:51px;height:25px;background:#575757;border:1px solid #7c7c7c"></div>
<div class="t" style="left:82px;top:95px;font-size:13.5px;line-height:16px;color:#ececec;font-weight:normal;">10</div>
<svg class="a" style="left:118.5px;top:100px;" width="6" height="3.5" viewBox="0 0 6 3.5"><path d="M0 0L6 0L3.0 3.5Z" fill="#e0e0e0"/></svg>
<div class="a" style="left:135px;top:89px;width:24px;height:24px;background:#585858;"></div>
<div class="t" style="left:143px;top:96px;font-size:13px;line-height:15px;color:#f0f0f0;font-weight:bold;">B</div>
<div class="t" style="left:173px;top:96px;font-size:13px;line-height:15px;color:#f0f0f0;font-weight:normal;"><i>I</i></div>
<div class="t" style="left:86px;top:122px;font-size:14px;line-height:16px;color:#f0f0f0;font-weight:bold;">U</div>
<div class="a" style="left:86px;top:135px;width:10px;height:1.3px;background:#f0f0f0;"></div>
<svg class="a" style="left:106px;top:127px;" width="6" height="3.5" viewBox="0 0 6 3.5"><path d="M0 0L6 0L3.0 3.5Z" fill="#e0e0e0"/></svg>
<div class="t" style="left:128px;top:121px;font-size:13px;line-height:15px;color:#e8e8e8;font-weight:normal;">A</div>
<div class="a" style="left:124px;top:133px;width:18px;height:3.5px;background:#e00d0d;"></div>
<svg class="a" style="left:148px;top:127px;" width="6" height="3.5" viewBox="0 0 6 3.5"><path d="M0 0L6 0L3.0 3.5Z" fill="#e0e0e0"/></svg>
<div class="a" style="left:163px;top:116px;width:1px;height:24px;background:#7a7a7a;"></div>
<div class="t" style="left:173px;top:122px;font-size:14px;line-height:16px;color:#e0e0e0;font-weight:normal;">A</div>
<div class="t" style="left:201px;top:124px;font-size:12px;line-height:14px;color:#e0e0e0;font-weight:normal;">A</div>
<svg class="a" style="left:181px;top:119px;" width="4" height="4" viewBox="0 0 4 4"><circle cx="2" cy="2" r="1.2" fill="#4a90d9"/></svg>
<svg class="a" style="left:210px;top:120px;" width="4" height="4" viewBox="0 0 4 4"><circle cx="2" cy="2" r="1.2" fill="#4a90d9"/></svg>
<div class="a" style="left:226px;top:62px;width:24px;height:24px;background:#575757;"></div>
<div class="a" style="left:301px;top:114px;width:24px;height:24px;background:#575757;"></div>
<svg class="a" style="left:232px;top:68px;" width="14" height="16" viewBox="0 0 14 16"><rect x="0" y="0" width="12" height="1.2" fill="#f4f4f4"/><rect x="2" y="2" width="8" height="1.2" fill="#f4f4f4"/><rect x="0" y="4" width="12" height="1.2" fill="#f4f4f4"/><rect x="2" y="6" width="8" height="1.2" fill="#f4f4f4"/></svg>
<svg class="a" style="left:257px;top:71px;" width="14" height="16" viewBox="0 0 14 16"><rect x="0" y="0" width="12" height="1.2" fill="#f4f4f4"/><rect x="2" y="2" width="8" height="1.2" fill="#f4f4f4"/><rect x="0" y="4" width="12" height="1.2" fill="#f4f4f4"/><rect x="2" y="6" width="8" height="1.2" fill="#f4f4f4"/></svg>
<svg class="a" style="left:282px;top:73px;" width="14" height="16" viewBox="0 0 14 16"><rect x="2" y="0" width="8" height="1.2" fill="#f4f4f4"/><rect x="0" y="2" width="12" height="1.2" fill="#f4f4f4"/><rect x="2" y="4" width="8" height="1.2" fill="#f4f4f4"/><rect x="0" y="6" width="12" height="1.2" fill="#f4f4f4"/></svg>
<svg class="a" style="left:307px;top:68px;" width="14" height="16" viewBox="0 0 14 16"><rect x="0" y="0" width="12" height="1.2" fill="#f4f4f4"/><rect x="2" y="4" width="8" height="1.2" fill="#f4f4f4"/><rect x="0" y="8" width="12" height="1.2" fill="#f4f4f4"/><rect x="2" y="12" width="8" height="1.2" fill="#f4f4f4"/></svg>
<svg class="a" style="left:231px;top:93px;" width="15" height="14" viewBox="0 0 15 14"><rect x="0" y="0" width="14" height="14" fill="#fafafa"/><path d="M1.5 1.8h4M8 1.8h4M1.5 4h2M5 4h2M8.5 4h2" stroke="#9a9a9a" stroke-width="0.8"/></svg>
<svg class="a" style="left:254px;top:98px;" width="6" height="3.5" viewBox="0 0 6 3.5"><path d="M0 0L6 0L3.0 3.5Z" fill="#d8d8d8"/></svg>
<svg class="a" style="left:270px;top:93px;" width="19" height="15" viewBox="0 0 19 15"><path d="M0 0.7h17M0 3.4h17" stroke="#b8b8b8" stroke-width="1"/><path d="M0 6.2h16q1.5 0 1.5 1.5v2q0 1.5-1.5 1.5h-6" stroke="#7fc4ec" stroke-width="1" fill="none"/><path d="M0 9h6M0 11.8h6" stroke="#b8b8b8" stroke-width="1"/><path d="M12 8.5L9 11.2L12 14" stroke="#7fc4ec" stroke-width="1.5" fill="none"/></svg>
<svg class="a" style="left:296px;top:93px;" width="17" height="14" viewBox="0 0 17 14"><rect x="0.5" y="0.5" width="15.5" height="13" fill="#7fb6e0"/><rect x="1.3" y="1.3" width="6.4" height="2.6" fill="#fff"/><rect x="8.7" y="1.3" width="6.6" height="2.6" fill="#fff"/><rect x="1.3" y="4.9" width="14" height="4" fill="#fff"/><rect x="1.3" y="9.9" width="6.4" height="3" fill="#fff"/><rect x="8.7" y="9.9" width="6.6" height="3" fill="#fff"/></svg>
<svg class="a" style="left:321px;top:100px;" width="6" height="3.5" viewBox="0 0 6 3.5"><path d="M0 0L6 0L3.0 3.5Z" fill="#d8d8d8"/></svg>
<svg class="a" style="left:229px;top:116px;" width="18" height="20" viewBox="0 0 18 20"><path d="M2 2.5h5M2 2.5l2-1.8M2 2.5l2 1.8" stroke="#8fd0ee" stroke-width="1" fill="none"/><text x="1" y="14.5" font-family="Liberation Sans" font-weight="bold" font-size="11.5" fill="#a8a8a8">T1</text><path d="M9 17.5h6M15 17.5l-2-1.8M15 17.5l-2 1.8" stroke="#8fd0ee" stroke-width="1" fill="none"/></svg>
<svg class="a" style="left:257px;top:120px;" width="14" height="16" viewBox="0 0 14 16"><rect x="0" y="0" width="12" height="1.2" fill="#f4f4f4"/><rect x="0" y="2" width="8" height="1.2" fill="#f4f4f4"/><rect x="0" y="4" width="12" height="1.2" fill="#f4f4f4"/><rect x="0" y="6" width="8" height="1.2" fill="#f4f4f4"/><rect x="0" y="8" width="12" height="1.2" fill="#f4f4f4"/><rect x="0" y="10" width="8" height="1.2" fill="#f4f4f4"/></svg>
<svg class="a" style="left:282px;top:120px;" width="14" height="16" viewBox="0 0 14 16"><rect x="0" y="0" width="12" height="1.2" fill="#f4f4f4"/><rect x="2" y="2" width="8" height="1.2" fill="#f4f4f4"/><rect x="0" y="4" width="12" height="1.2" fill="#f4f4f4"/><rect x="2" y="6" width="8" height="1.2" fill="#f4f4f4"/><rect x="0" y="8" width="12" height="1.2" fill="#f4f4f4"/><rect x="2" y="10" width="8" height="1.2" fill="#f4f4f4"/></svg>
<svg class="a" style="left:307px;top:120px;" width="14" height="16" viewBox="0 0 14 16"><rect x="0" y="0" width="12" height="1.2" fill="#f4f4f4"/><rect x="4" y="2" width="8" height="1.2" fill="#f4f4f4"/><rect x="0" y="4" width="12" height="1.2" fill="#f4f4f4"/><rect x="4" y="6" width="8" height="1.2" fill="#f4f4f4"/><rect x="0" y="8" width="12" height="1.2" fill="#f4f4f4"/><rect x="4" y="10" width="8" height="1.2" fill="#f4f4f4"/></svg>
<svg class="a" style="left:332px;top:120px;" width="14" height="16" viewBox="0 0 14 16"><rect x="0" y="0" width="12" height="1.2" fill="#f4f4f4"/><rect x="0" y="2" width="12" height="1.2" fill="#f4f4f4"/><rect x="0" y="4" width="12" height="1.2" fill="#f4f4f4"/><rect x="0" y="6" width="12" height="1.2" fill="#f4f4f4"/><rect x="0" y="8" width="12" height="1.2" fill="#f4f4f4"/><rect x="0" y="10" width="12" height="1.2" fill="#f4f4f4"/></svg>
<div class="a" style="left:358px;top:62px;width:99px;height:25px;background:#575757;border:1px solid #7c7c7c"></div>
<div class="t" style="left:360px;top:68px;font-size:13.5px;line-height:16px;color:#ececec;font-weight:normal;">Default</div>
<svg class="a" style="left:445px;top:73px;" width="6" height="3.5" viewBox="0 0 6 3.5"><path d="M0 0L6 0L3.0 3.5Z" fill="#e0e0e0"/></svg>
<div class="t" style="left:363px;top:95px;font-size:13px;line-height:15px;color:#f0f0f0;font-weight:normal;">%</div>
<svg class="a" style="left:387px;top:92px;" width="20" height="17" viewBox="0 0 20 17"><rect x="1" y="1" width="15" height="8.5" fill="#6fae2e"/><text x="3" y="8.2" font-family="Liberation Sans" font-size="8" font-weight="bold" fill="#fff">€</text>
<ellipse cx="14.5" cy="8" rx="4.2" ry="2.6" fill="#f2a64a" stroke="#ffd9a0" stroke-width="0.6"/><ellipse cx="14.5" cy="10.5" rx="4.2" ry="2.6" fill="#f2a64a" stroke="#ffd9a0" stroke-width="0.6"/>
<ellipse cx="8.5" cy="11.5" rx="4.2" ry="2.6" fill="#f2a64a" stroke="#ffd9a0" stroke-width="0.6"/><ellipse cx="8.5" cy="14" rx="4.2" ry="2.6" fill="#f09a3a" stroke="#ffd9a0" stroke-width="0.6"/></svg>
<svg class="a" style="left:362px;top:119px;" width="16" height="15" viewBox="0 0 16 15"><path d="M1 3.8h6" stroke="#8fd0ee" stroke-width="1.6"/><path d="M0.5 3.8L3.5 1V6.6Z" fill="#8fd0ee"/><text x="6" y="7" font-family="Liberation Sans" font-size="8" fill="#d8d8d8">.0</text><text x="2" y="14" font-family="Liberation Sans" font-size="8" fill="#d8d8d8">.00</text></svg>
<svg class="a" style="left:388px;top:119px;" width="16" height="15" viewBox="0 0 16 15"><text x="2" y="7" font-family="Liberation Sans" font-size="8" fill="#d8d8d8">.00</text><path d="M1 10.8h5" stroke="#8fd0ee" stroke-width="1.6"/><path d="M8 10.8L5 8V13.6Z" fill="#8fd0ee"/><text x="6" y="14" font-family="Liberation Sans" font-size="8" fill="#d8d8d8">.0</text></svg>
<svg class="a" style="left:466px;top:64px;" width="20" height="20" viewBox="0 0 20 20"><path d="M3.5 8 L9 2.5 L14.5 8 L9 13.5Z" fill="#ffffff"/><path d="M6 2 L8.5 4.5" stroke="#2a5a8a" stroke-width="1.3"/><path d="M14 8 Q16 10.5 14.5 12 Q13 10.5 14 8Z" fill="#4a90d9"/><rect x="1" y="15" width="18" height="4.5" fill="#eef07c"/></svg>
<div class="t" style="left:490px;top:67px;font-size:13.5px;line-height:16px;color:#ececec;font-weight:normal;">Shading</div>
<svg class="a" style="left:546px;top:72.6px;" width="6" height="3.5" viewBox="0 0 6 3.5"><path d="M0 0L6 0L3.0 3.5Z" fill="#d8d8d8"/></svg>
<svg class="a" style="left:561px;top:66px;" width="18" height="15" viewBox="0 0 18 15"><rect x="0.5" y="0.5" width="13" height="10" fill="#a7c8e8"/><path d="M0.5 3.5h13M0.5 6.8h13M4.8 0.5v10M9.2 0.5v10" stroke="#f2f2f2" stroke-width="1.3"/><rect x="0.5" y="0.5" width="3.6" height="2.6" fill="#c8e07a"/><rect x="7" y="7.5" width="10" height="6.5" fill="#fafafa"/><path d="M8.5 9.5l2 1.2-2 1.2M12 9.5h3.5M12 12h3.5" stroke="#555" stroke-width="0.8" fill="none"/></svg>
<div class="t" style="left:583px;top:67px;font-size:13.5px;line-height:16px;color:#ececec;font-weight:normal;letter-spacing:0.3px">Conditional formatting</div>
<svg class="a" style="left:728px;top:72.6px;" width="6" height="3.5" viewBox="0 0 6 3.5"><path d="M0 0L6 0L3.0 3.5Z" fill="#d8d8d8"/></svg>
<svg class="a" style="left:468px;top:100px;" width="15" height="15" viewBox="0 0 15 15"><rect x="0.5" y="0.5" width="6.2" height="6.2" fill="#fafafa"/><rect x="7.8" y="0.5" width="6.2" height="6.2" fill="#fafafa"/><rect x="0.5" y="7.8" width="6.2" height="6.2" fill="#fafafa"/><rect x="7.8" y="7.8" width="6.2" height="6.2" fill="#fafafa"/></svg>
<div class="t" style="left:490px;top:101px;font-size:13.5px;line-height:16px;color:#ececec;font-weight:normal;">Borders</div>
<svg class="a" style="left:545px;top:106.5px;" width="6" height="3.5" viewBox="0 0 6 3.5"><path d="M0 0L6 0L3.0 3.5Z" fill="#d8d8d8"/></svg>
<svg class="a" style="left:561px;top:100px;" width="19" height="19" viewBox="0 0 19 19"><rect x="0.5" y="0.5" width="14" height="12" fill="#f4f4f4"/><path d="M0.5 4.2h14M0.5 8.4h14M5.2 0.5v12M9.8 0.5v12" stroke="#777" stroke-width="0.9"/><rect x="5.7" y="4.7" width="3.6" height="3.2" fill="#6fb8ea"/><path d="M4 18 L7 13 L15 5 L17.5 7.5 L9.5 15.5 Z" fill="#5a9ae0"/><path d="M15 5 L17.5 2.5 L18.5 3.5 L17.5 7.5Z" fill="#aaa"/></svg>
<div class="t" style="left:583px;top:101px;font-size:13px;line-height:15px;color:#ececec;font-weight:normal;letter-spacing:0.1px">Cell styles</div>
<svg class="a" style="left:648px;top:106.5px;" width="6" height="3.5" viewBox="0 0 6 3.5"><path d="M0 0L6 0L3.0 3.5Z" fill="#d8d8d8"/></svg>
<svg class="a" style="left:748px;top:66px;" width="18" height="17" viewBox="0 0 18 17"><rect x="1" y="0" width="6" height="3" fill="#f0f0f0"/><rect x="8.5" y="0" width="6" height="3" fill="#f0f0f0"/><rect x="1" y="4" width="6" height="3" fill="#f0f0f0"/><rect x="8.5" y="4" width="6" height="3" fill="#f0f0f0"/><path d="M0 9.2h17" stroke="#5aa8e0" stroke-width="1.4"/><rect x="7" y="8" width="3.5" height="2.5" fill="#9ee0ff"/><rect x="11.5" y="8" width="4" height="2.5" fill="#9ee0ff"/><rect x="1" y="12.5" width="6" height="3" fill="#f0f0f0"/><rect x="8.5" y="12.5" width="6" height="3" fill="#f0f0f0"/></svg>
<div class="t" style="left:771px;top:67px;font-size:13.5px;line-height:16px;color:#ececec;font-weight:normal;">Insert</div>
<svg class="a" style="left:813px;top:72px;" width="6" height="3.5" viewBox="0 0 6 3.5"><path d="M0 0L6 0L3.0 3.5Z" fill="#d8d8d8"/></svg>
<svg class="a" style="left:748px;top:91px;" width="18" height="17" viewBox="0 0 18 17"><rect x="1" y="0" width="6" height="3" fill="#f0f0f0"/><rect x="8.5" y="0" width="6" height="3" fill="#f0f0f0"/><rect x="1" y="4" width="6" height="3" fill="#f0f0f0"/><rect x="8.5" y="4" width="6" height="3" fill="#f0f0f0"/><path d="M0 9.2h17" stroke="#c84040" stroke-width="1.2"/><rect x="7" y="8" width="4" height="2.5" fill="#f0b0b0"/><rect x="1" y="12.5" width="6" height="3" fill="#f0f0f0"/><rect x="8.5" y="12.5" width="6" height="3" fill="#f0f0f0"/></svg>
<div class="t" style="left:771px;top:92px;font-size:13.5px;line-height:16px;color:#ececec;font-weight:normal;">Delete</div>
<svg class="a" style="left:817px;top:97px;" width="6" height="3.5" viewBox="0 0 6 3.5"><path d="M0 0L6 0L3.0 3.5Z" fill="#d8d8d8"/></svg>
<svg class="a" style="left:748px;top:116px;" width="18" height="15" viewBox="0 0 18 15"><rect x="1.5" y="1.5" width="14" height="11" fill="#f0f0f0" stroke="#c8c8c8" stroke-width="0.8"/><path d="M3 7 Q8.5 2 14 7 Q8.5 12 3 7Z" fill="none" stroke="#3560b0" stroke-width="1.1"/><circle cx="8.5" cy="7" r="1.6" fill="#c03030"/></svg>
<div class="t" style="left:771px;top:117px;font-size:13.5px;line-height:16px;color:#ececec;font-weight:normal;">Visibility</div>
<svg class="a" style="left:827px;top:122px;" width="6" height="3.5" viewBox="0 0 6 3.5"><path d="M0 0L6 0L3.0 3.5Z" fill="#d8d8d8"/></svg>
<svg class="a" style="left:860px;top:66px;" width="34" height="32" viewBox="0 0 34 32"><text x="3" y="15.3" font-family="Liberation Sans" font-weight="bold" font-size="15.5" fill="#4a78b0" opacity="0.85">A</text><text x="3.5" y="30.5" font-family="Liberation Sans" font-weight="bold" font-size="15" fill="#40a050" opacity="0.85">Z</text><path d="M14 11 L30 11 L24 18 L24 27 L20 27 L20 18 Z" fill="#8a8a8a"/><path d="M25 14 L28 11.5" stroke="#d0d0d0" stroke-width="1"/></svg>
<div class="t" style="left:852px;top:109px;font-size:13.5px;line-height:16px;color:#ececec;font-weight:normal;">Sort and</div>
<div class="t" style="left:858px;top:127px;font-size:13.5px;line-height:16px;color:#ececec;font-weight:normal;">filter</div>
<svg class="a" style="left:890px;top:133px;" width="6" height="3.5" viewBox="0 0 6 3.5"><path d="M0 0L6 0L3.0 3.5Z" fill="#d8d8d8"/></svg>
<svg class="a" style="left:918px;top:66px;" width="13" height="14" viewBox="0 0 13 14"><path d="M11 1 H1.5 L6.5 6.5 L1.5 12 H11" stroke="#8a8a8a" stroke-width="1.1" fill="none"/></svg>
<div class="t" style="left:938px;top:67px;font-size:13.5px;line-height:16px;color:#ececec;font-weight:normal;">Autosum</div>
<svg class="a" style="left:1000px;top:72.5px;" width="6" height="3.5" viewBox="0 0 6 3.5"><path d="M0 0L6 0L3.0 3.5Z" fill="#d8d8d8"/></svg>
<svg class="a" style="left:917px;top:92px;" width="14" height="15" viewBox="0 0 14 15"><rect x="1" y="1" width="12" height="3" fill="#fafafa"/><rect x="1" y="4" width="12" height="9" fill="#777" opacity="0.7"/><rect x="10.5" y="6" width="2.5" height="8" fill="#3a8ad8"/></svg>
<div class="t" style="left:938px;top:92px;font-size:13.5px;line-height:16px;color:#ececec;font-weight:normal;">Fill</div>
<svg class="a" style="left:961px;top:97px;" width="6" height="3.5" viewBox="0 0 6 3.5"><path d="M0 0L6 0L3.0 3.5Z" fill="#d8d8d8"/></svg>
<svg class="a" style="left:916px;top:117px;" width="16" height="15" viewBox="0 0 16 15"><path d="M1 9 L8 2 L14 6 L7 13 Z" fill="#f4f4f4"/><path d="M8 2 L14 6 L11 9 L5 5Z" fill="#f0b080"/><path d="M6 14 H15" stroke="#909090" stroke-width="0.8"/></svg>
<div class="t" style="left:938px;top:117px;font-size:13.5px;line-height:16px;color:#ececec;font-weight:normal;">Delete</div>
<svg class="a" style="left:984px;top:122px;" width="6" height="3.5" viewBox="0 0 6 3.5"><path d="M0 0L6 0L3.0 3.5Z" fill="#d8d8d8"/></svg>
<svg class="a" style="left:1022px;top:66px;" width="32" height="34" viewBox="0 0 32 34"><path d="M18 20 L28 30" stroke="#7d96d8" stroke-width="3" stroke-linecap="round"/><circle cx="12" cy="12" r="9.3" fill="#fbfbfb" stroke="#a0a0a0" stroke-width="1"/></svg>
<svg class="a" style="left:1061px;top:69px;" width="22" height="12" viewBox="0 0 22 12"><text x="1" y="9" font-family="Liberation Sans" font-size="10.5" fill="#e8e8e8">a</text><circle cx="10.5" cy="6" r="1.2" fill="#4a90d9"/><text x="13" y="9" font-family="Liberation Sans" font-size="10.5" fill="#e8e8e8">b</text></svg>
<svg class="a" style="left:1064px;top:91px;" width="17" height="16" viewBox="0 0 17 16"><path d="M7 7 L13 13" stroke="#8a9ad0" stroke-width="1.8"/><circle cx="5.5" cy="5.5" r="4.2" fill="#f4f4f4"/><path d="M7.5 1.5 L9.5 3.5 L7 5" stroke="#9080e0" stroke-width="1" fill="none"/></svg>
<svg class="a" style="left:1064px;top:120px;" width="16" height="9" viewBox="0 0 16 9"><path d="M1 4.5h1.2M3.2 4.5h1.2M5.5 4.5h5" stroke="#8fd0f4" stroke-width="2.2"/><path d="M9.5 0.5 L14.5 4.5 L9.5 8.5Z" fill="#8fd0f4"/></svg>
<svg class="a" style="left:1096px;top:67px;" width="33" height="31" viewBox="0 0 33 31"><rect x="1" y="1" width="24" height="19" fill="#fafafa" stroke="#7a8ab0" stroke-width="1" stroke-dasharray="1.5 1"/><path d="M17 10 L17 27 L20.5 23.5 L23.5 29.5 L26 28.5 L23 22.5 L28 22.5 Z" fill="#fafafa" stroke="#555" stroke-width="0.9"/></svg>
<div class="a" style="left:14px;top:208px;width:12.5px;height:2px;background:#f4f4f4;"></div>
<div class="a" style="left:14px;top:212.5px;width:12.5px;height:2px;background:#f4f4f4;"></div>
<div class="a" style="left:14px;top:217px;width:12.5px;height:2px;background:#f4f4f4;"></div>
<div class="a" style="left:36px;top:204px;width:1px;height:17px;background:#6a6a6a;"></div>
<div class="a" style="left:67px;top:204px;width:1px;height:17px;background:#6a6a6a;"></div>
<div class="a" style="left:149px;top:204px;width:1px;height:17px;background:#6a6a6a;"></div>
<div class="a" style="left:180px;top:204px;width:1px;height:17px;background:#6a6a6a;"></div>
<div class="a" style="left:291px;top:204px;width:1px;height:17px;background:#6a6a6a;"></div>
<svg class="a" style="left:43px;top:203px;" width="16" height="20" viewBox="0 0 16 20"><path d="M3 8 Q3 1.5 7.5 1.5 Q12 1.5 12 8" stroke="#5a9ae0" stroke-width="1.8" fill="none"/><path d="M6 15 L6 6.5 Q6 5 7.3 5 Q8.6 5 8.6 6.5 L8.6 11 L9 9.5 Q10 8.5 11 9.5 L11.3 10.5 Q12.3 9.8 13.2 10.8 L13.5 12 Q14.5 11.5 15 12.5 L15 16 Q14.5 19 11.5 19.5 L8.5 19.5 Q6 19 4 16.5 L2.5 14.5 Q2 13 3.5 13 Z" fill="#f8f8f8" stroke="#888" stroke-width="0.7"/></svg>
<svg class="a" style="left:76px;top:206px;" width="13" height="15" viewBox="0 0 13 15"><path d="M0.5 0.5 H8 L12 4.5 V14.5 H0.5Z" fill="#fafafa"/><path d="M8 0.5 V4.5 H12Z" fill="#c8c8c8"/></svg>
<svg class="a" style="left:98px;top:212.3px;" width="6" height="3.5" viewBox="0 0 6 3.5"><path d="M0 0L6 0L3.0 3.5Z" fill="#d8d8d8"/></svg>
<svg class="a" style="left:110px;top:208px;" width="19" height="13" viewBox="0 0 19 13"><path d="M0.5 1.5 Q0.5 0.5 1.5 0.5 H6 L7.5 2 H15 Q16 2 16 3 V5 H3.5 L0.5 12.5Z" fill="#f5c879"/><path d="M3.5 5 H18.5 L15.5 12.5 H0.5Z" fill="#fbd898" stroke="#e8a54a" stroke-width="0.6"/></svg>
<svg class="a" style="left:136px;top:212.3px;" width="6" height="3.5" viewBox="0 0 6 3.5"><path d="M0 0L6 0L3.0 3.5Z" fill="#d8d8d8"/></svg>
<svg class="a" style="left:156px;top:205px;" width="17" height="16" viewBox="0 0 17 16"><rect x="0.5" y="0.5" width="16" height="15" rx="1" fill="#7da2e6"/><rect x="3.5" y="1.5" width="10" height="6.5" fill="#f4f4f4"/><rect x="4" y="10.5" width="9" height="5" fill="#f4f4f4"/><rect x="5.5" y="11.5" width="2.5" height="3" fill="#7da2e6"/></svg>
<svg class="a" style="left:186px;top:206px;" width="16" height="13" viewBox="0 0 16 13"><path d="M3.5 9 Q3.5 2.5 9 2.5 Q14.5 2.5 14.5 8.5 Q14.5 11 12.5 12.5" stroke="#a6a6a6" stroke-width="2.4" fill="none"/><path d="M0 6.5 L7 6.5 L3.5 11 Z" fill="#a6a6a6"/></svg>
<svg class="a" style="left:210.5px;top:211.5px;" width="6" height="3.5" viewBox="0 0 6 3.5"><path d="M0 0L6 0L3.0 3.5Z" fill="#d8d8d8"/></svg>
<svg class="a" style="left:226px;top:206px;" width="16" height="13" viewBox="0 0 16 13"><g transform="translate(16,0) scale(-1,1)"><path d="M3.5 9 Q3.5 2.5 9 2.5 Q14.5 2.5 14.5 8.5 Q14.5 11 12.5 12.5" stroke="#a6a6a6" stroke-width="2.4" fill="none"/><path d="M0 6.5 L7 6.5 L3.5 11 Z" fill="#a6a6a6"/></g></svg>
<svg class="a" style="left:251px;top:211.5px;" width="6" height="3.5" viewBox="0 0 6 3.5"><path d="M0 0L6 0L3.0 3.5Z" fill="#d8d8d8"/></svg>
<svg class="a" style="left:267px;top:206px;" width="16" height="13" viewBox="0 0 16 13"><g transform="translate(16,0) scale(-1,1)"><path d="M3.5 9 Q3.5 2.5 9 2.5 Q14.5 2.5 14.5 8.5 Q14.5 11 12.5 12.5" stroke="#a6a6a6" stroke-width="2.4" fill="none"/><path d="M0 6.5 L7 6.5 L3.5 11 Z" fill="#a6a6a6"/></g></svg>
<svg class="a" style="left:300px;top:205px;" width="12" height="17" viewBox="0 0 12 17"><path d="M1 1 L1 13 L4 10.5 L6.5 16 L8.5 15 L6 9.5 L10.5 9.5 Z" fill="#f0f0f0" stroke="#777" stroke-width="0.6"/></svg>
<div class="t" style="left:320px;top:201px;font-size:13px;line-height:15px;color:#f0f0f0;font-weight:bold;">&raquo;</div>
<div class="a" style="left:346px;top:203px;width:200px;height:24px;background:#5c5c5c;border:1px solid #6c6c6c;border-bottom:none"></div>
<svg class="a" style="left:351px;top:207px;" width="18" height="18" viewBox="0 0 18 18"><path d="M0.5 0.5 H7 L10.5 4 V14.5 H0.5Z" fill="#f0f0f0"/><path d="M7 0.5 V4 H10.5Z" fill="#bbb"/><path d="M2 7h7M2 9.5h7M2 12h7M4.5 6v8M7 6v8" stroke="#8a8a8a" stroke-width="0.7"/><rect x="8.5" y="9" width="8.5" height="8.5" rx="1" fill="#4e9a3a"/><text x="10.5" y="16" font-family="Liberation Sans" font-size="7" font-weight="bold" fill="#fff">P</text></svg>
<div class="t" style="left:383px;top:209px;font-size:13.5px;line-height:16px;color:#ececec;font-weight:normal;">Energy Sources.pmd</div>
<svg class="a" style="left:528px;top:211px;" width="10" height="10" viewBox="0 0 10 10"><path d="M1 1L9 9M9 1L1 9" stroke="#f0f0f0" stroke-width="1.8"/></svg>
<div class="a" style="left:2px;top:695px;width:1179px;height:1px;background:#1a1a1a;"></div>
<div class="a" style="left:2px;top:696px;width:1195px;height:22px;background:#3f3f3f;"></div>
<div class="a" style="left:2px;top:696px;width:586px;height:22px;background:#464745;"></div>
<div class="a" style="left:2px;top:696px;width:23px;height:21px;background:#474747;border:1px solid #575757"></div>
<div class="a" style="left:25px;top:696px;width:23px;height:21px;background:#474747;border:1px solid #575757"></div>
<div class="a" style="left:48px;top:696px;width:23px;height:21px;background:#474747;border:1px solid #575757"></div>
<div class="a" style="left:71px;top:696px;width:23px;height:21px;background:#474747;border:1px solid #575757"></div>
<svg class="a" style="left:8px;top:703px;" width="10" height="9" viewBox="0 0 10 9"><rect x="0" y="0" width="2" height="8" fill="#fafafa"/><path d="M2.5 4 L6.5 0 V2.5 H9 V5.5 H6.5 V8Z" fill="#fafafa"/></svg>
<svg class="a" style="left:32px;top:703px;" width="10" height="9" viewBox="0 0 10 9"><path d="M0 4 L4 0 V2.5 H7 V5.5 H4 V8Z" fill="#fafafa"/></svg>
<svg class="a" style="left:55px;top:703px;" width="10" height="9" viewBox="0 0 10 9"><path d="M7 4 L3 0 V2.5 H0 V5.5 H3 V8Z" fill="#fafafa"/></svg>
<svg class="a" style="left:77px;top:703px;" width="10" height="9" viewBox="0 0 10 9"><rect x="7" y="0" width="2" height="8" fill="#fafafa"/><path d="M6.5 4 L2.5 0 V2.5 H0 V5.5 H2.5 V8Z" fill="#fafafa"/></svg>
<div class="a" style="left:97px;top:695px;width:75px;height:21px;background:#ffffff;border:2px solid #111;border-top:none"></div>
<div class="t" style="left:97px;top:701px;width:75px;text-align:center;font-size:11.5px;line-height:13px;font-weight:bold;color:#111">&laquo;Summary&raquo;</div>
<svg class="a" style="left:179px;top:698px;" width="19" height="18" viewBox="0 0 19 18"><rect x="0.5" y="0.5" width="14" height="12" fill="#f0f0f0"/><path d="M0.5 3.5h14M0.5 6.5h14M0.5 9.5h14M5 0.5v12M10 0.5v12" stroke="#6a6a6a" stroke-width="0.8"/><path d="M11 14.5h7M14.5 11v7" stroke="#f4d000" stroke-width="2.4"/></svg>
<div class="a" style="left:588px;top:696px;width:2px;height:22px;background:#2c2c2c;"></div>
<div class="a" style="left:594px;top:699px;width:583px;height:16px;background:#2e2e2e;"></div>
<div class="a" style="left:596px;top:700px;width:15px;height:14px;background:linear-gradient(#9a9a9a,#6e6e6e)"></div>
<svg class="a" style="left:600px;top:702px;" width="7" height="10" viewBox="0 0 7 10"><path d="M6 0 V10 L0.5 5Z" fill="#fafafa"/></svg>
<div class="a" style="left:611px;top:700px;width:195px;height:14px;background:linear-gradient(#9a9a9a,#6a6a6a);border-radius:1px"></div>
<svg class="a" style="left:704px;top:703px;" width="7" height="8" viewBox="0 0 7 8"><path d="M1 0v8M3.5 0v8M6 0v8" stroke="#444" stroke-width="0.8"/></svg>
<div class="a" style="left:1162px;top:700px;width:14px;height:14px;background:linear-gradient(#9a9a9a,#6e6e6e)"></div>
<svg class="a" style="left:1165px;top:702px;" width="7" height="10" viewBox="0 0 7 10"><path d="M1 0 V10 L6.5 5Z" fill="#fafafa"/></svg>
<div class="a" style="left:1181px;top:227px;width:16px;height:469px;background:#2e2e2e;"></div>
<div class="a" style="left:1182px;top:227px;width:15px;height:15px;background:linear-gradient(#9a9a9a,#6e6e6e)"></div>
<svg class="a" style="left:1184px;top:231px;" width="11" height="7" viewBox="0 0 11 7"><path d="M0 6 H11 L5.5 0.5Z" fill="#fafafa"/></svg>
<div class="a" style="left:1182px;top:243px;width:15px;height:136px;background:linear-gradient(90deg,#8a8a8a,#6a6a6a)"></div>
<svg class="a" style="left:1185px;top:308px;" width="9" height="6" viewBox="0 0 9 6"><path d="M0 0.5h9M0 2.8h9M0 5.1h9" stroke="#444" stroke-width="0.8"/></svg>
<div class="a" style="left:1182px;top:639px;width:15px;height:14px;background:linear-gradient(#9a9a9a,#6e6e6e)"></div>
<svg class="a" style="left:1184px;top:643px;" width="11" height="7" viewBox="0 0 11 7"><path d="M0 0.5 H11 L5.5 6Z" fill="#fafafa"/></svg>
<div class="a" style="left:1182px;top:654px;width:15px;height:15px;background:#3c3c3c;border:1px solid #555"></div>
<div class="a" style="left:1182px;top:670px;width:15px;height:15px;background:#3c3c3c;border:1px solid #555"></div>
<div class="a" style="left:1182px;top:686px;width:15px;height:15px;background:#3c3c3c;border:1px solid #555"></div>
<div class="a" style="left:1182px;top:702px;width:15px;height:15px;background:#3c3c3c;border:1px solid #555"></div>
<svg class="a" style="left:1186px;top:657px;" width="8" height="9" viewBox="0 0 8 9"><path d="M0 4h8M4 0.5L0.5 4h7ZM4 4.5L0.5 8h7Z" fill="#fafafa" stroke="#fafafa" stroke-width="0.6"/></svg>
<svg class="a" style="left:1187px;top:674px;" width="6" height="6" viewBox="0 0 6 6"><circle cx="3" cy="3" r="2.5" fill="#e0308a"/></svg>
<svg class="a" style="left:1186px;top:689px;" width="8" height="9" viewBox="0 0 8 9"><path d="M0 5h8M4 4.5L0.5 0.5h7ZM4 8.5L0.5 4.5h7Z" fill="#fafafa" stroke="#fafafa" stroke-width="0.6"/></svg>
<svg class="a" style="left:1182px;top:705px;" width="14" height="12" viewBox="0 0 14 12"><path d="M0 1h13M3 0.5v11" stroke="#fafafa" stroke-width="1.3"/><path d="M6 3 L12 9M6 3 L6 7.5M6 3 L10.5 3" stroke="#fafafa" stroke-width="1.5" fill="none"/></svg>
<div class="a" style="left:2px;top:718px;width:1195px;height:28px;background:#4c4c4c;"></div>
<div class="a" style="left:8px;top:721px;width:537px;height:22px;background:#5e5e5e;border:1px solid #7a7a7a"></div>
<div class="t" style="left:11px;top:725px;font-size:13.5px;line-height:16px;color:#b0b0b0;font-weight:normal;">Chart1</div>
<div class="a" style="left:550px;top:721px;width:160px;height:22px;background:#5e5e5e;border:1px solid #7a7a7a"></div>
<div class="t" style="left:553px;top:725px;font-size:13.5px;line-height:16px;color:#c0c0c0;font-weight:normal;">Summary</div>
<div class="a" style="left:715px;top:721px;width:140px;height:22px;background:#5e5e5e;border:1px solid #7a7a7a"></div>
<div class="t" style="left:718px;top:725px;font-size:13.5px;line-height:16px;color:#c8c8c8;font-weight:normal;">Content=4476</div>
<svg class="a" style="left:861px;top:723px;" width="18" height="18" viewBox="0 0 18 18"><path d="M3 8 A6 6 0 0 1 14 6" stroke="#7a7a7a" stroke-width="2.6" fill="none"/><path d="M15.5 2 V8 H9.5Z" fill="#7a7a7a"/><path d="M15 10 A6 6 0 0 1 4 12" stroke="#7a7a7a" stroke-width="2.6" fill="none"/><path d="M2.5 16 V10 H8.5Z" fill="#7a7a7a"/></svg>
<div class="a" style="left:885px;top:721px;width:40px;height:22px;background:#555;border:1px solid #6e6e6e"></div>
<div class="t" style="left:895px;top:725px;font-size:13.5px;line-height:16px;color:#c8c8c8;font-weight:normal;">Ins</div>
<div class="a" style="left:930px;top:721px;width:40px;height:22px;background:#5a5a5a;border:1px solid #6e6e6e"></div>
<div class="t" style="left:931px;top:725px;font-size:13.5px;line-height:16px;color:#c8c8c8;font-weight:normal;">AUTO</div>
<div class="a" style="left:980px;top:731px;width:8px;height:1px;background:#d8d8d8;"></div>
<div class="a" style="left:995px;top:731px;width:111px;height:1px;background:#1e1e1e;"></div>
<svg class="a" style="left:1043px;top:723px;" width="12" height="17" viewBox="0 0 12 17"><circle cx="6" cy="8.5" r="5.5" fill="#fafafa"/><rect x="5.3" y="0" width="1.4" height="2" fill="#111"/><rect x="5.3" y="15" width="1.4" height="2" fill="#111"/></svg>
<svg class="a" style="left:1109px;top:726px;" width="11" height="11" viewBox="0 0 11 11"><path d="M0 5.5h10M5 0.5v10" stroke="#e0e0e0" stroke-width="1.2"/></svg>
<div class="t" style="left:1134px;top:725px;font-size:13.5px;line-height:16px;color:#c8c8c8;font-weight:normal;">100%</div>
<div class="t" style="left:1175px;top:721px;font-size:12px;line-height:14px;color:#f0f0f0;font-weight:bold;">&raquo;</div>
<div class="a" style="left:0px;top:746px;width:1199px;height:2px;background:#252b2f;"></div>
</body></html>
